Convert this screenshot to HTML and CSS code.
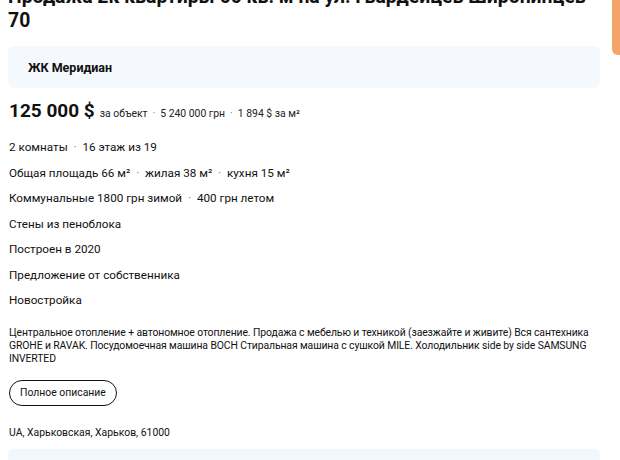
FILE: index.html
```html
<!DOCTYPE html>
<html lang="ru">
<head>
<meta charset="utf-8">
<link rel="stylesheet" href="styles.css">
</head>
<body>
<div class="side-tab"></div>
<main class="page">
  <h1 class="title">Продажа 2к квартиры 66 кв. м на ул. Гвардейцев Широнинцев 70</h1>
  <div class="complex">ЖК Меридиан</div>
  <div class="price-row">
    <span class="price">125 000 $</span>
    <span class="price-meta">за объект</span>
    <span class="dot">·</span>
    <span class="price-meta">5 240 000 грн</span>
    <span class="dot">·</span>
    <span class="price-meta">1 894 $ за м²</span>
  </div>
  <ul class="facts">
    <li>2 комнаты <span class="dot">·</span> 16 этаж из 19</li>
    <li>Общая площадь 66 м² <span class="dot">·</span> жилая 38 м² <span class="dot">·</span> кухня 15 м²</li>
    <li>Коммунальные 1800 грн зимой <span class="dot">·</span> 400 грн летом</li>
    <li>Стены из пеноблока</li>
    <li>Построен в 2020</li>
    <li>Предложение от собственника</li>
    <li>Новостройка</li>
  </ul>
  <p class="desc">Центральное отопление + автономное отопление. Продажа с мебелью и техникой (заезжайте и живите) Вся сантехника GROHE и RAVAK. Посудомоечная машина BOCH Стиральная машина с сушкой MILE. Холодильник side by side SAMSUNG INVERTED</p>
  <button class="more" type="button">Полное описание</button>
  <p class="address">UA, Харьковская, Харьков, 61000</p>
  <div class="bottom-box"></div>
</main>
</body>
</html>
```

FILE: styles.css
```css
html, body {
  margin: 0;
  padding: 0;
  background: #fff;
  overflow: hidden;
}
body {
  font-family: Roboto, "Noto Sans", sans-serif;
  color: #111;
  width: 620px;
  height: 460px;
  position: relative;
}
.side-tab {
  position: absolute;
  top: -10px;
  right: -10px;
  width: 18px;
  height: 65px;
  background: #f2a469;
  border-radius: 6px;
}
.page {
  padding: 0 20px 0 8px;
  display: flex;
  flex-direction: column;
  align-items: flex-start;
}
.title {
  margin: -15px 0 0 0;
  font-size: 19.4px;
  line-height: 24px;
  font-weight: 700;
  color: #111;
  width: 600px;
}
.complex {
  align-self: stretch;
  margin-top: 13px;
  height: 42px;
  display: flex;
  align-items: center;
  padding-left: 20px;
  background: #f5f9fd;
  border-radius: 6px;
  font-size: 12.5px;
  font-weight: 700;
}
.price-row {
  margin-top: 11px;
  margin-left: 1px;
  display: flex;
  align-items: baseline;
  gap: 3px;
}
.price {
  font-size: 19px;
  font-weight: 700;
  margin-right: 2px;
}
.price-meta {
  font-size: 10.4px;
  color: #222;
}
.dot {
  color: #777;
  margin: 0 2px;
  font-size: 10.4px;
}
.facts {
  list-style: none;
  margin: 13px 0 0 1px;
  padding: 0;
  display: flex;
  flex-direction: column;
}
.facts li {
  font-size: 11.7px;
  line-height: 25.5px;
  color: #111;
}
.facts .dot {
  font-size: 11.6px;
  margin: 0 3px;
}
.desc {
  margin: 12px 0 0 1px;
  font-size: 10.4px;
  line-height: 13px;
  color: #111;
  letter-spacing: -0.1px;
}
.more {
  margin-top: 15px;
  margin-left: 1px;
  height: 26px;
  padding: 0 10px;
  border: 1.5px solid #111;
  border-radius: 13px;
  background: #fff;
  font-family: Roboto, sans-serif;
  font-size: 10.4px;
  color: #111;
}
.address {
  margin: 20px 0 0 1px;
  font-size: 10.4px;
  line-height: 13px;
  color: #111;
}
.bottom-box {
  align-self: stretch;
  margin-top: 10px;
  height: 40px;
  background: #f1f8fc;
  border-radius: 6px;
}
```
